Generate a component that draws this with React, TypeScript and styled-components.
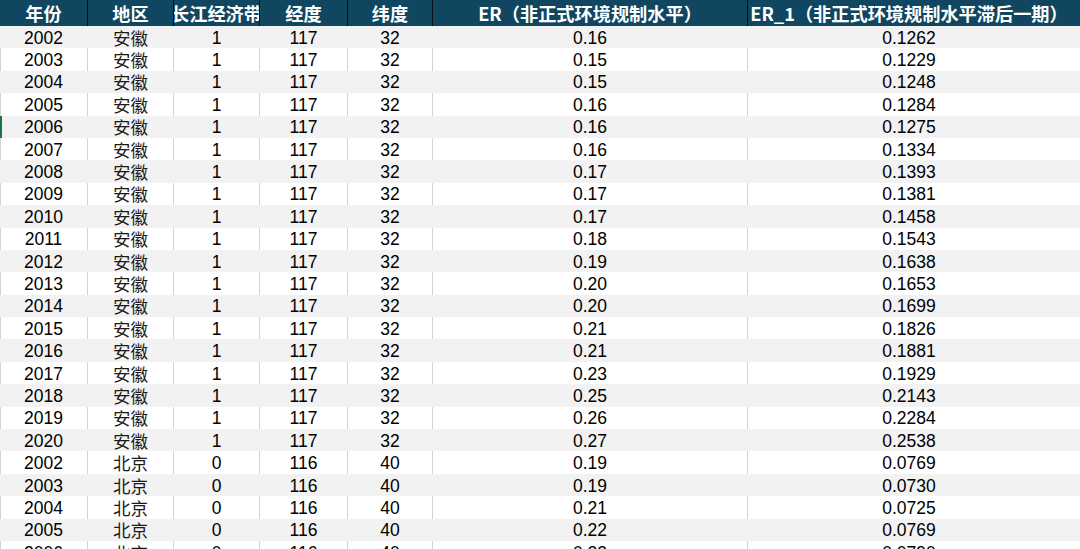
import React from "react";
import styled, { createGlobalStyle } from "styled-components";

const Global = createGlobalStyle`
  html, body { margin: 0; padding: 0; background: #ffffff; overflow: hidden; }
  #root { width: 1080px; height: 549px; overflow: hidden; }
`;

const COLS = "88px 86px 86px 88px 85px 315px 1fr";

const Sheet = styled.div`
  width: 1080px;
  height: 549px;
  overflow: hidden;
  display: flex;
  flex-direction: column;
  background: #ffffff;
`;

const HeaderRow = styled.div`
  display: grid;
  grid-template-columns: ${COLS};
  height: 26px;
  flex: 0 0 26px;
  background: #10465f;
`;

const HeaderCell = styled.div<{ $padRight?: number }>`
  display: flex;
  align-items: center;
  justify-content: center;
  overflow: hidden;
  white-space: nowrap;
  border-right: 1px solid #0a0f14;
  padding-right: ${(p) => p.$padRight ?? 0}px;
  color: #ffffff;
  font-family: "Noto Sans CJK SC", "Noto Sans", sans-serif;
  font-weight: 700;
  font-size: 18.2px;
  line-height: 1;
  &:last-child { border-right: none; }
`;

const Row = styled.div<{ $striped: boolean; $active?: boolean }>`
  display: grid;
  grid-template-columns: ${COLS};
  height: 22.4px;
  flex: 0 0 22.4px;
  background: ${(p) => (p.$striped ? "#f2f2f2" : "#ffffff")};
  box-shadow: ${(p) =>
    p.$active
      ? "inset 2px 0 0 #217346"
      : p.$striped
      ? "none"
      : "inset 1px 0 0 #d4d4d4"};
`;

const Cell = styled.div<{ $striped: boolean; $padRight?: number }>`
  display: flex;
  align-items: center;
  justify-content: center;
  overflow: hidden;
  white-space: nowrap;
  border-right: 1px solid ${(p) => (p.$striped ? "#f2f2f2" : "#d4d4d4")};
  padding-right: ${(p) => p.$padRight ?? 0}px;
  padding-top: 1px;
  color: #000000;
  font-family: "Liberation Sans", "Noto Sans CJK SC", sans-serif;
  font-size: 17.5px;
  line-height: 20px;
  &:last-child { border-right: none; }
`;

const Region = styled.span`
  display: block;
  font-family: "Noto Sans CJK SC", sans-serif;
  font-size: 17.5px;
  line-height: 18px;
  color: #1a1a1a;
`;

type Rec = [number, string, number, number, number, string, string];

const anhuiER = ["0.16","0.15","0.15","0.16","0.16","0.16","0.17","0.17","0.17","0.18","0.19","0.20","0.20","0.21","0.21","0.23","0.25","0.26","0.27"];
const anhuiER1 = ["0.1262","0.1229","0.1248","0.1284","0.1275","0.1334","0.1393","0.1381","0.1458","0.1543","0.1638","0.1653","0.1699","0.1826","0.1881","0.1929","0.2143","0.2284","0.2538"];
const bjER = ["0.19","0.19","0.21","0.22","0.22"];
const bjER1 = ["0.0769","0.0730","0.0725","0.0769","0.0790"];

const rows: Rec[] = [
  ...anhuiER.map((er, i): Rec => [2002 + i, "安徽", 1, 117, 32, er, anhuiER1[i]]),
  ...bjER.map((er, i): Rec => [2002 + i, "北京", 0, 116, 40, er, bjER1[i]]),
];

const headers = [
  "年份",
  "地区",
  "长江经济带",
  "经度",
  "纬度",
  "ER（非正式环境规制水平）",
  "ER_1（非正式环境规制水平滞后一期）",
];

export default function App() {
  return (
    <>
      <Global />
      <Sheet>
        <HeaderRow>
          {headers.map((h, i) => (
            <HeaderCell key={h} $padRight={i === 6 ? 10 : 0}>
              {h}
            </HeaderCell>
          ))}
        </HeaderRow>
        {rows.map((r, idx) => {
          const striped = idx % 2 === 0;
          return (
            <Row key={idx} $striped={striped} $active={idx === 4}>
              <Cell $striped={striped}>{r[0]}</Cell>
              <Cell $striped={striped}>
                <Region>{r[1]}</Region>
              </Cell>
              <Cell $striped={striped}>{r[2]}</Cell>
              <Cell $striped={striped}>{r[3]}</Cell>
              <Cell $striped={striped}>{r[4]}</Cell>
              <Cell $striped={striped}>{r[5]}</Cell>
              <Cell $striped={striped} $padRight={10}>{r[6]}</Cell>
            </Row>
          );
        })}
      </Sheet>
    </>
  );
}
